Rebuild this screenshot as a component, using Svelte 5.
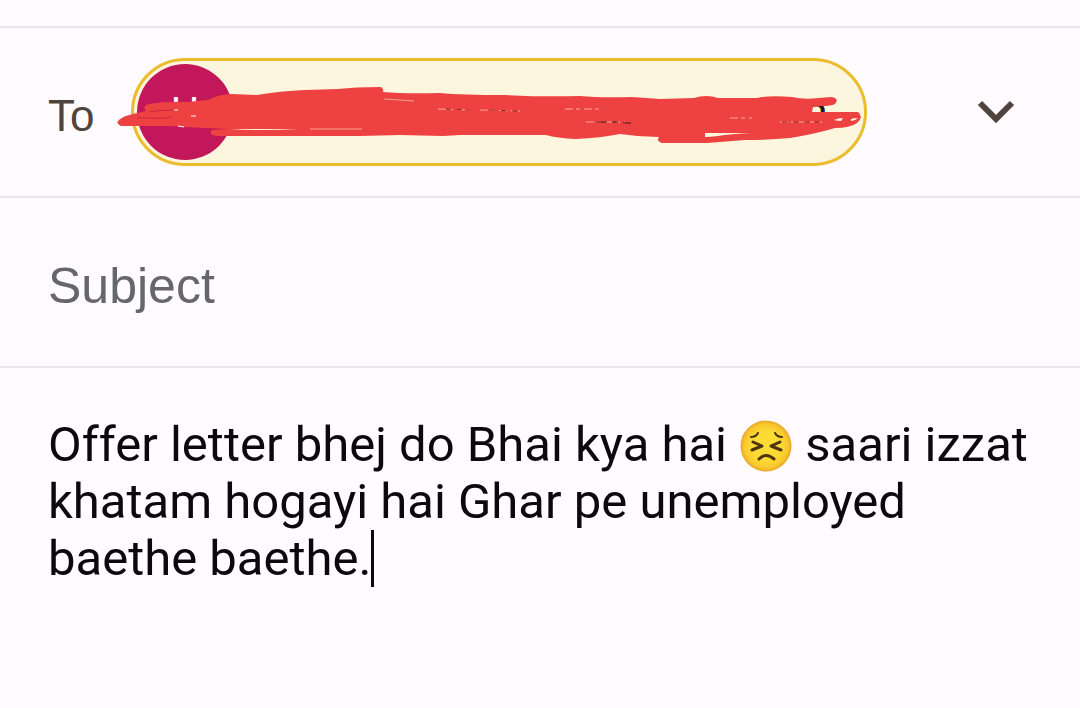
<script lang="ts">
	let subject: string = $state("");
	let expanded: boolean = $state(false);
</script>

<main class="compose">
	<div class="row recipients">
		<span class="to" id="to-label">To</span>

		<button type="button" class="chip" aria-labelledby="to-label">
			<span class="avatar">H</span>
			<span class="name">a</span>
			<svg class="marker" viewBox="131 57 736 108" aria-hidden="true">
				<path
					fill="#ee4141"
					d="M119 119 Q123 115 133 113 L146 110 Q142 105 149 103 Q166 100 187 101 L208 99 Q219 93 232 93 L257 94 Q280 90 305 89 L338 88 Q354 86 381 86 Q384 88 383 91 Q405 93 440 92 Q462 94 505 94 Q545 96 580 95 Q600 97 632 96 L660 98 L694 97 Q706 93 718 97 L757 97 Q770 94 792 96 Q804 99 819 97 L831 96 Q840 97 835 103 Q831 105 822 105 L813 106 L812 111 L858 111 Q864 116 857 122 Q850 127 835 127 Q815 133 790 137 Q770 139 745 139 L707 142 Q688 142 662 142 Q656 140 659 136 Q640 136 620 133 Q600 137 576 138 Q557 137 546 134 L460 134 L443 135 L400 134 L360 135 L216 135 Q208 133 212 129 L228 128 L184 126 L170 125 L121 125 Q115 122 119 119 Z" />
				<g fill="#fdf6de">
					<path d="M230 129 Q260 127 299 129 Z" />
					<path d="M705 132 L752 132 Q730 133 718 135 Q710 136 705 136 Z" />
					<path d="M834 119 Q838 117 843 117 L841 120 Q837 120 834 119 Z" />
					<path d="M851 118 Q854 117 858 117 Q855 120 851 120 Z" />
				</g>
				<g fill="none" stroke-linecap="butt">
					<path stroke="#f7a58f" stroke-width="1" d="M384 98 Q400 99 414 100 M310 128 L362 128" />
					<path stroke="#c82748" stroke-width="1" d="M137 117 L152 117 Q164 118 172 116 M149 111 Q160 109 176 109" />
					<path stroke="#ffffff" stroke-width="1" d="M174 109 h4 M191 115 h5 M178 125 l6 1" />
					<path stroke="#f8a996" stroke-width="1" stroke-dasharray="8 3 4 4" d="M438 108 L470 109 M480 109 L520 110 M565 108 L600 108 M586 121 L625 121 M730 117 L752 117 M780 121 L822 121" />
					<path stroke="#8f2822" stroke-width="1" stroke-dasharray="5 6" d="M446 108 L470 109 M490 109 L517 110 M782 121 L820 121" />
					<path stroke="#4b1715" stroke-width="1" d="M597 121 h10 M612 121 h6 M623 122 h8" />
				</g>
			</svg>
		</button>

		<button
			type="button"
			class="toggle"
			aria-label="Show Cc and Bcc"
			aria-expanded={expanded}
			onclick={() => (expanded = !expanded)}>
			<svg width="40" height="28" viewBox="0 0 40 28" aria-hidden="true">
				<path d="M4 5 L20 21 L36 5" fill="none" stroke="#50443e" stroke-width="6" />
			</svg>
		</button>
	</div>

	<div class="row">
		<input
			class="subject"
			type="text"
			aria-label="Subject"
			placeholder="Subject"
			bind:value={subject} />
	</div>

	<div
		class="message"
		contenteditable="true"
		role="textbox"
		tabindex="0"
		aria-multiline="true"
		aria-label="Compose email">Offer letter bhej do Bhai kya hai <svg class="emoji" viewBox="0 0 54 54" role="img" aria-label="Persevering face">
			<defs>
				<radialGradient id="face">
					<stop offset="0.55" stop-color="#fcdb35" />
					<stop offset="0.85" stop-color="#f9c92d" />
					<stop offset="1" stop-color="#eba52c" />
				</radialGradient>
			</defs>
			<circle cx="27" cy="27" r="25.5" fill="url(#face)" />
			<g fill="none" stroke="#4e3510" stroke-linecap="round" stroke-linejoin="round">
				<path stroke-width="2" d="M12 18 Q17 18 19 14 M36 14 Q38 18 43 18" />
				<path stroke-width="3" d="M14 23 L23 27 L13 31 M41 23 L32 27 L42 31" />
				<path stroke-width="3" d="M20 40 Q27 33 35 40" />
			</g>
		</svg> saari izzat khatam hogayi hai Ghar pe unemployed baethe baethe.<span class="caret"></span></div>
</main>

<style>
	:global(body) {
		margin: 0;
		background: #fffbff;
	}

	.compose {
		box-sizing: border-box;
		min-height: 100vh;
		padding-top: 26px;
		background: #fffbff;
		font-family: Roboto, "Liberation Sans", sans-serif;
	}

	.row {
		display: flex;
		align-items: center;
		box-sizing: border-box;
		min-height: 170px;
		padding: 0 48px;
		border-top: 2px solid #e9e6ea;
	}

	.recipients {
		justify-content: space-between;
	}

	.to {
		flex: none;
		width: 83px;
		padding-top: 8px;
		color: #50443e;
		font-family: "Liberation Sans", Arial, sans-serif;
		font-size: 44px;
		line-height: 56px;
	}

	.chip {
		position: relative;
		display: flex;
		flex: 0 1 736px;
		align-items: center;
		justify-content: space-between;
		height: 108px;
		padding: 0 36px 0 3px;
		border: 3px solid #ebbd2e;
		border-radius: 54px;
		background: #fdf6de;
		color: #201a17;
		font: inherit;
		cursor: pointer;
	}

	.avatar {
		display: flex;
		align-items: center;
		justify-content: center;
		width: 96px;
		height: 96px;
		border-radius: 50%;
		background: #c2185b;
		color: #ffffff;
		font-size: 40px;
	}

	.name {
		font-size: 44px;
	}

	.marker {
		position: absolute;
		inset: -3px;
		width: calc(100% + 6px);
		height: calc(100% + 6px);
		overflow: visible;
		pointer-events: none;
	}

	.toggle {
		display: flex;
		flex: none;
		margin-left: auto;
		padding: 16px;
		border: 0;
		background: transparent;
		cursor: pointer;
	}

	.subject {
		flex: 1;
		min-width: 0;
		padding: 8px 0 0;
		border: 0;
		outline: none;
		background: transparent;
		color: #0b090c;
		font-family: "Liberation Sans", Arial, sans-serif;
		font-size: 50px;
		line-height: 60px;
	}

	.subject::placeholder {
		color: #66676b;
		opacity: 1;
	}

	.message {
		padding: 48px;
		border-top: 2px solid #e9e6ea;
		outline: none;
		color: #0b090c;
		font-size: 49px;
		line-height: 57px;
	}

	.emoji {
		width: 54px;
		height: 54px;
		vertical-align: bottom;
	}

	.caret {
		display: inline-block;
		width: 3px;
		height: 57px;
		background: #0b090c;
		vertical-align: bottom;
	}
</style>
